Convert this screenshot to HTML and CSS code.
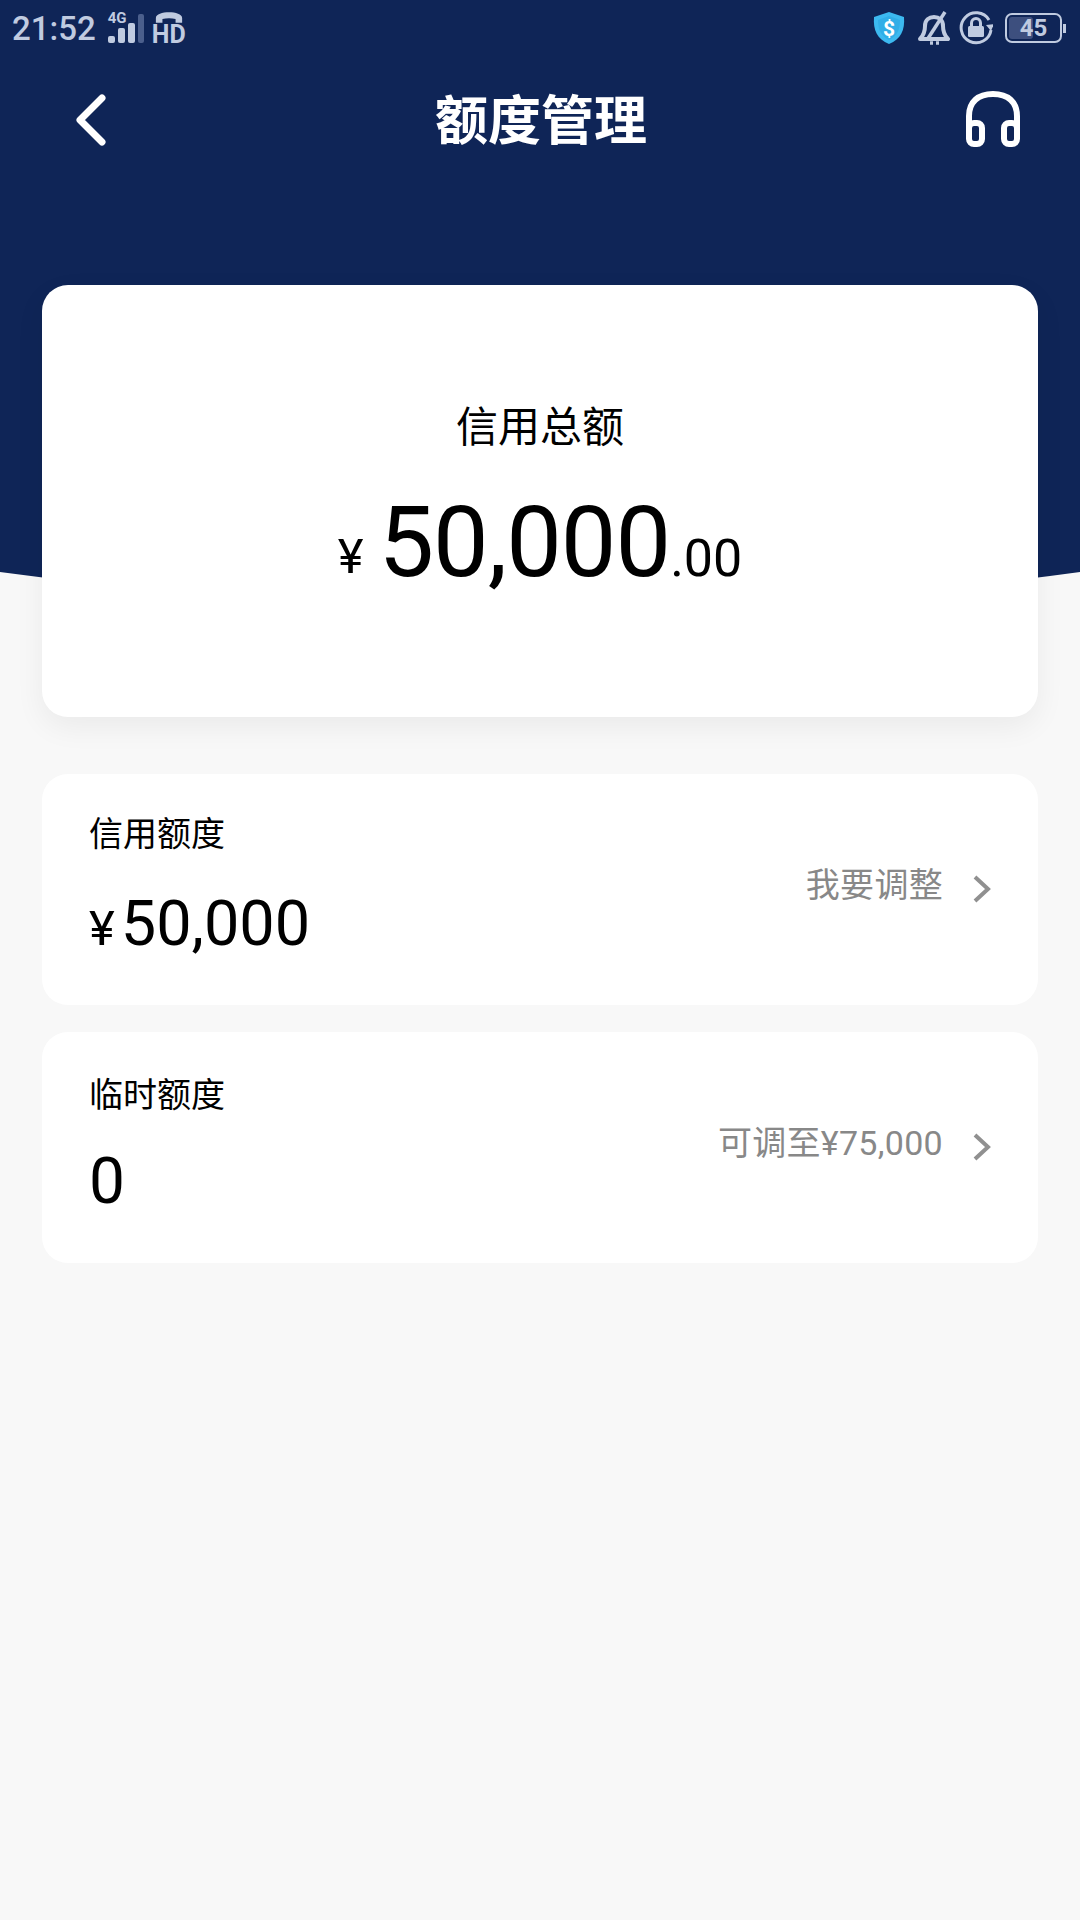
FILE: index.html
```html
<!DOCTYPE html>
<html lang="zh-CN">
<head>
  <meta charset="UTF-8">
  <title>额度管理</title>
  <meta name="viewport" content="width=device-width, initial-scale=1.0">
  <link rel="stylesheet" href="styles.css">
</head>
<body>

  <header class="top">
    <div class="status-bar">
      <div class="status-left">
        <span class="time">21:52</span>
        <div class="signal">
          <span class="signal-tag">4G</span>
          <svg class="signal-bars" width="36" height="30" viewBox="0 0 36 30">
            <rect x="0" y="22" width="7" height="7" rx="2" fill="#c0cbe0"/>
            <rect x="10" y="14" width="7" height="15" rx="2" fill="#c0cbe0"/>
            <rect x="20" y="9" width="7" height="20" rx="2" fill="#c0cbe0"/>
            <rect x="30" y="0" width="6" height="29" rx="2" fill="#4b5f8c"/>
          </svg>
        </div>
        <div class="hd">
          <svg width="30" height="13" viewBox="0 0 32 13">
            <path d="M2 12V7C2 3 9 1 16 1s14 2 14 6v5h-7V8c-4-1-10-1-14 0v4z" fill="#c0cbe0"/>
          </svg>
          <span class="hd-text">HD</span>
        </div>
      </div>
      <div class="status-right">
        <svg width="32" height="34" viewBox="0 0 32 34">
          <path d="M16 1l15 5c1 13-3 22-15 27C4 28 0 19 1 6z" fill="#3cb9f0"/>
          <path d="M16 5l11 4c0 10-3 16-11 20C8 25 5 19 5 9z" fill="#1e9ad6" opacity="0.35"/>
          <text x="16" y="25" text-anchor="middle" class="shield-sign">$</text>
        </svg>
        <svg class="bell" width="32" height="34" viewBox="0 0 32 34">
          <path d="M2 28c3-3 5-7 5-13 0-6 4-9 9-9s9 3 9 9c0 6 2 10 5 13z" fill="none" stroke="#c0cbe0" stroke-width="4" stroke-linejoin="round"/>
          <path d="M12 32h3M18 32h3" stroke="#c0cbe0" stroke-width="3.5"/>
          <path d="M9 29L27 1" stroke="#c0cbe0" stroke-width="3.5"/>
        </svg>
        <svg width="34" height="34" viewBox="0 0 34 34">
          <path d="M30 9A15 15 0 1 0 32 19" fill="none" stroke="#c0cbe0" stroke-width="3"/>
          <path d="M27 14l5 6 3-7z" fill="#c0cbe0"/>
          <rect x="9" y="15" width="16" height="11" rx="1.5" fill="#c0cbe0"/>
          <path d="M12.500 15v-3a4.500 4.500 0 0 1 9 0v3" fill="none" stroke="#c0cbe0" stroke-width="3"/>
        </svg>
        <div class="battery">
          <div class="battery-body">
            <div class="battery-level" style="width: 45%"></div>
            <span class="battery-num">45</span>
          </div>
          <div class="battery-tip"></div>
        </div>
      </div>
    </div>

    <nav class="nav">
      <svg width="40" height="60" viewBox="0 0 40 60">
        <path d="M33 9L11 31l22 22" fill="none" stroke="#fff" stroke-width="7" stroke-linecap="round" stroke-linejoin="round"/>
      </svg>
      <h1>额度管理</h1>
      <svg width="54" height="56" viewBox="0 0 54 56">
        <path d="M3 38V25C3 11 12 3 27 3s24 8 24 22v13" fill="none" stroke="#fff" stroke-width="6"/>
        <rect x="3" y="32" width="13" height="21" rx="5" fill="none" stroke="#fff" stroke-width="6"/>
        <rect x="38" y="32" width="13" height="21" rx="5" fill="none" stroke="#fff" stroke-width="6"/>
      </svg>
    </nav>
  </header>

  <main>
    <section class="total-card">
      <div class="total-label">信用总额</div>
      <div class="total-amount">
        <span class="total-yen">¥</span>
        <span class="total-num">50,000</span><span class="total-dec">.00</span>
      </div>
    </section>

    <section class="limit-row limit-first">
      <div class="limit-info">
        <div class="limit-label">信用额度</div>
        <div class="limit-value"><span class="limit-yen">¥</span>50,000</div>
      </div>
      <div class="limit-action">
        <span>我要调整</span>
        <svg class="chevron" width="18" height="30" viewBox="0 0 18 30">
          <path d="M2 3l13 12L2 27" fill="none" stroke="#909090" stroke-width="4"/>
        </svg>
      </div>
    </section>

    <section class="limit-row limit-temp">
      <div class="limit-info">
        <div class="limit-label">临时额度</div>
        <div class="limit-value">0</div>
      </div>
      <div class="limit-action">
        <span>可调至¥75,000</span>
        <svg class="chevron" width="18" height="30" viewBox="0 0 18 30">
          <path d="M2 3l13 12L2 27" fill="none" stroke="#909090" stroke-width="4"/>
        </svg>
      </div>
    </section>
  </main>

</body>
</html>
```

FILE: styles.css
```css
body {
  margin: 0;
  width: 1080px;
  height: 1920px;
  overflow: hidden;
  background-color: #f8f8f8;
  font-family: Roboto, "Noto Sans CJK SC", sans-serif;
  color: #000;
}
.top {
  position: relative;
  height: 285px;
}
/* curved navy backdrop, runs down behind the total card */
.top::before {
  content: "";
  position: absolute;
  top: 0;
  left: 0;
  width: 1080px;
  height: 610px;
  background-color: #0f2557;
  clip-path: path("M0 0H1080V572Q540 646 0 572Z");
}
.status-bar {
  position: relative;
  display: flex;
  justify-content: space-between;
  align-items: center;
  height: 56px;
  padding: 0 12px;
}
.status-left, .status-right {
  display: flex;
  align-items: center;
}
.status-right {
  gap: 12px;
}
.time {
  font-size: 33px;
  font-weight: 500;
  color: #c0cbe0;
}
.signal {
  position: relative;
  width: 36px;
  height: 30px;
  margin-left: 12px;
  margin-top: 2px;
}
.signal-bars {
  display: block;
}
.signal-tag {
  position: absolute;
  top: -3px;
  left: 0;
  font-size: 15px;
  font-weight: 700;
  line-height: 14px;
  color: #c0cbe0;
}
.hd {
  display: flex;
  flex-direction: column;
  align-items: center;
  margin-left: 8px;
}
.hd svg {
  display: block;
}
.hd-text {
  font-size: 25px;
  font-weight: 700;
  line-height: 21px;
  color: #c0cbe0;
}
.shield-sign {
  font-family: Roboto, sans-serif;
  font-size: 21px;
  font-weight: 700;
  fill: #fff;
}
.bell {
  margin-left: 1px;
  margin-right: -3px;
}
.battery {
  display: flex;
  align-items: center;
  gap: 1px;
  margin-right: 2px;
}
.battery-body {
  position: relative;
  width: 53px;
  height: 26px;
  border: 2px solid #c0cbe0;
  border-radius: 7px;
  display: flex;
  justify-content: center;
  align-items: center;
}
.battery-level {
  position: absolute;
  top: 2px;
  bottom: 2px;
  left: 2px;
  background-color: #3d4f7e;
  border-radius: 3px;
}
.battery-num {
  position: relative;
  font-size: 24px;
  font-weight: 700;
  color: #c0cbe0;
}
.battery-tip {
  width: 3px;
  height: 9px;
  background-color: #c0cbe0;
}
.nav {
  position: relative;
  display: flex;
  justify-content: space-between;
  align-items: center;
  height: 92px;
  margin-top: 17px;
  padding: 0 60px 0 69px;
}
.nav h1 {
  margin: 0 0 4px 7px;
  font-size: 53px;
  font-weight: 700;
  color: #fff;
}
main {
  position: relative;
  padding: 0 42px;
}
.total-card {
  display: flex;
  flex-direction: column;
  align-items: center;
  height: 432px;
  padding-top: 113px;
  box-sizing: border-box;
  background-color: #fff;
  border-radius: 26px;
  box-shadow: 0 10px 30px rgba(0,0,0,0.06);
}
.total-label {
  font-size: 42px;
  line-height: 60px;
}
.total-amount {
  display: flex;
  align-items: baseline;
  margin-top: 24px;
  line-height: 120px;
}
.total-yen {
  font-size: 49px;
  margin-right: 15px;
  transform: translateY(-3px);
}
.total-num {
  font-size: 99px;
  letter-spacing: -1px;
}
.total-dec {
  font-size: 52px;
}
.limit-row {
  display: flex;
  justify-content: space-between;
  height: 231px;
  margin-top: 27px;
  padding: 0 47px 0 47px;
  box-sizing: border-box;
  background-color: #fff;
  border-radius: 26px;
}
.limit-first {
  margin-top: 57px;
}
.limit-label {
  margin-top: 35px;
  font-size: 34px;
  line-height: 50px;
}
.limit-value {
  margin-top: 25px;
  font-size: 63px;
  line-height: 80px;
}
.limit-yen {
  font-size: 49px;
  margin-right: 6px;
}
.limit-temp .limit-label {
  margin-top: 38px;
}
.limit-temp .limit-value {
  margin-top: 22px;
  font-size: 64px;
}
.limit-action {
  display: flex;
  align-items: center;
  gap: 30px;
  padding-bottom: 15px;
  font-size: 34px;
  letter-spacing: 0.3px;
  color: #888;
}
.chevron {
  margin-top: 14px;
}
```
